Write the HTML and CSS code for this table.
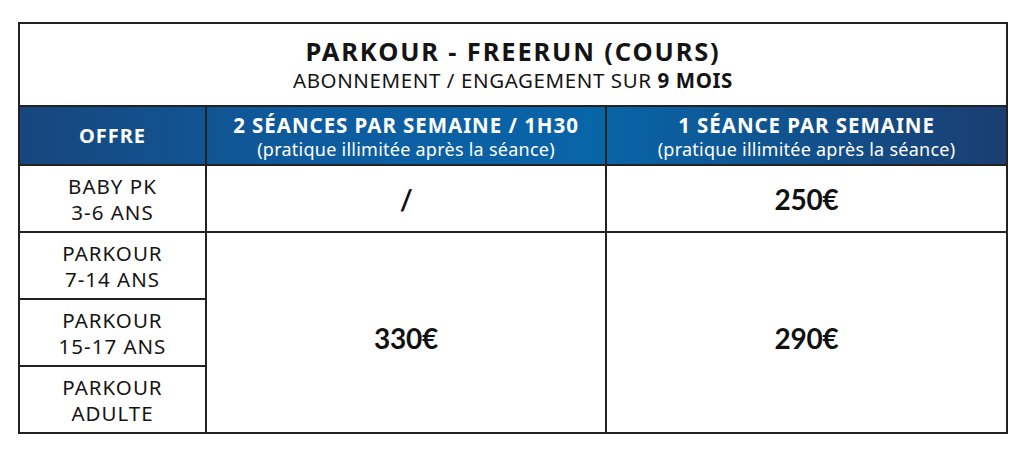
FILE: index.html
```html
<!DOCTYPE html>
<html lang="fr">
<head>
<meta charset="utf-8">
<link rel="stylesheet" href="styles.css">
</head>
<body>
<table class="tarifs">
  <colgroup>
    <col class="c1"><col class="c2"><col class="c3">
  </colgroup>
  <tr class="title-row">
    <td colspan="3">
      <div class="title">PARKOUR - FREERUN (COURS)</div>
      <div class="subtitle">ABONNEMENT / ENGAGEMENT SUR <b>9 MOIS</b></div>
    </td>
  </tr>
  <tr class="head-row">
    <th class="offre">OFFRE</th>
    <th><div class="h-main">2 SÉANCES PAR SEMAINE / 1H30</div><div class="h-sub">(pratique illimitée après la séance)</div></th>
    <th><div class="h-main">1 SÉANCE PAR SEMAINE</div><div class="h-sub">(pratique illimitée après la séance)</div></th>
  </tr>
  <tr class="row">
    <td class="label">BABY PK<br>3-6 ANS</td>
    <td class="price">/</td>
    <td class="price">250€</td>
  </tr>
  <tr class="row">
    <td class="label">PARKOUR<br>7-14 ANS</td>
    <td class="price tall" rowspan="3"><div class="shift">330€</div></td>
    <td class="price tall" rowspan="3"><div class="shift">290€</div></td>
  </tr>
  <tr class="row">
    <td class="label">PARKOUR<br>15-17 ANS</td>
  </tr>
  <tr class="row">
    <td class="label">PARKOUR<br>ADULTE</td>
  </tr>
</table>
</body>
</html>
```

FILE: styles.css
```css
html, body {
  margin: 0;
  padding: 0;
  background: #ffffff;
}
body {
  padding: 22px 0 0 18px;
  font-family: "Noto Sans", "Open Sans", sans-serif;
  color: #141414;
}
.tarifs {
  border-collapse: collapse;
  table-layout: fixed;
  width: 988px;
}
.c1 { width: 187px; }
.c2 { width: 400px; }
.c3 { width: 401px; }
.tarifs td, .tarifs th {
  border: 2px solid #222222;
  padding: 0;
  text-align: center;
  vertical-align: middle;
}
.title-row td {
  height: 81px;
}
.title {
  font-size: 25.5px;
  font-weight: 700;
  letter-spacing: 1.85px;
  line-height: 33px;
}
.subtitle {
  font-size: 20.5px;
  line-height: 28px;
  letter-spacing: 0.6px;
  margin-top: -2px;
}
.subtitle b { font-weight: 700; }
.head-row {
  background: linear-gradient(90deg, #17467d 0%, #0d5c9f 30%, #0865a8 58%, #1a3e72 100%);
  color: #ffffff;
}
.head-row th {
  height: 57px;
  font-weight: 700;
}
.offre {
  font-size: 20px;
  letter-spacing: 1px;
}
.h-main {
  font-size: 20.5px;
  letter-spacing: 0.95px;
  line-height: 26px;
}
.h-sub {
  font-size: 18px;
  font-weight: 400;
  letter-spacing: 0.25px;
  line-height: 22px;
}
.row td {
  height: 65px;
}
.label {
  font-size: 20.5px;
  line-height: 26px;
  letter-spacing: 1px;
}
.price {
  font-family: "Lato", "Noto Sans", sans-serif;
  font-size: 28px;
  font-weight: 700;
  color: #111111;
  letter-spacing: -0.3px;
}
.shift {
  padding-top: 10px;
}
```
